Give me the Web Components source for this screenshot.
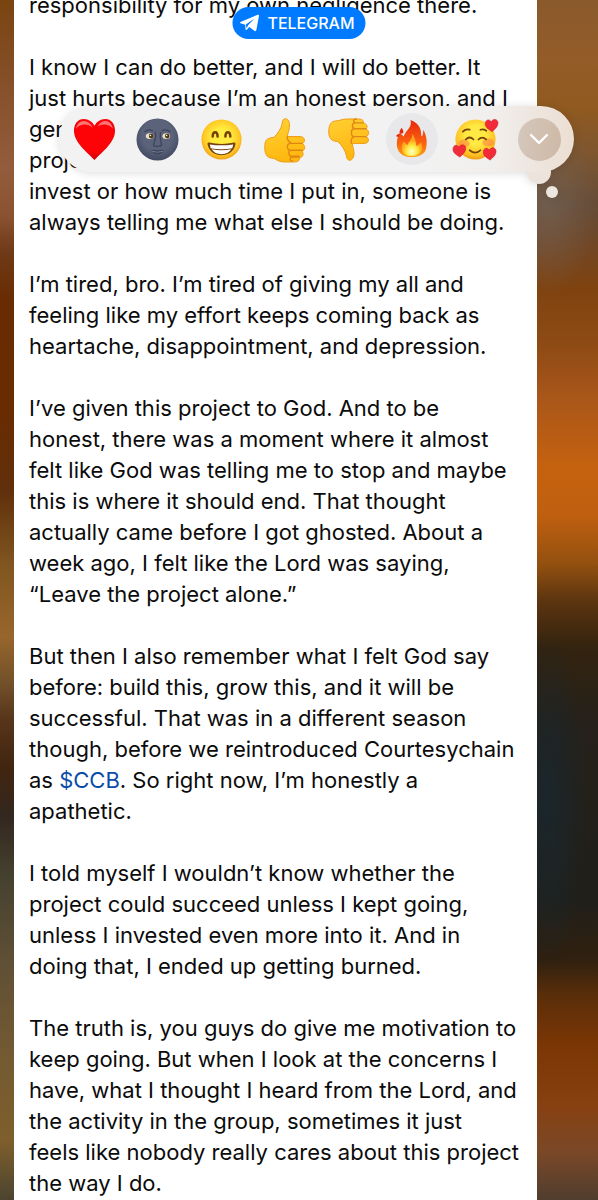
<!DOCTYPE html>
<html lang="en">

<head>
    <meta charset="utf-8">
    <meta name="viewport" content="width=device-width, initial-scale=1">
    <title>Chat</title>
    <style>
        body {
            margin: 0;
            font-family: Inter, "Liberation Sans", sans-serif;
            color: #0b0b0b;
        }
    </style>
</head>

<body>
    <chat-screen>
        <chat-message>
            <p>responsibility for my own negligence there.</p>
            <p>I know I can do better, and I will do better. It<br>just hurts because I’m an honest person, and I<br>genuinely<br>project<br>invest or how much time I put in, someone is<br>always telling me what else I should be doing.</p>
            <p>I’m tired, bro. I’m tired of giving my all and<br>feeling like my effort keeps coming back as<br>heartache, disappointment, and depression.</p>
            <p>I’ve given this project to God. And to be<br>honest, there was a moment where it almost<br>felt like God was telling me to stop and maybe<br>this is where it should end. That thought<br>actually came before I got ghosted. About a<br>week ago, I felt like the Lord was saying,<br>“Leave the project alone.”</p>
            <p>But then I also remember what I felt God say<br>before: build this, grow this, and it will be<br>successful. That was in a different season<br>though, before we reintroduced Courtesychain<br>as <a href="#ccb">$CCB</a>. So right now, I’m honestly a<br>apathetic.</p>
            <p>I told myself I wouldn’t know whether the<br>project could succeed unless I kept going,<br>unless I invested even more into it. And in<br>doing that, I ended up getting burned.</p>
            <p>The truth is, you guys do give me motivation to<br>keep going. But when I look at the concerns I<br>have, what I thought I heard from the Lord, and<br>the activity in the group, sometimes it just<br>feels like nobody really cares about this project<br>the way I do.</p>
        </chat-message>
        <app-badge slot="overlay">TELEGRAM</app-badge>
        <reaction-bar slot="overlay"></reaction-bar>
    </chat-screen>

    <script>
        class ChatScreen extends HTMLElement {
            constructor() {
                super();
                this.attachShadow({ mode: 'open' });
                this.shadowRoot.innerHTML = `
                    <style>
                        :host {
                            display: grid;
                            grid-template-columns: 14px 1fr 61px;
                            position: relative;
                            min-height: 100vh;
                            overflow: hidden;
                        }
                        .left {
                            background: linear-gradient(#7a4410 0%, #85502a 7%, #935c3c 14%, #8a5230 18%, #6f3a18 21%, #692c02 25%, #692b00 34%, #60300c 41%, #80551f 47%, #97662c 53%, #72502a 57%, #56351a 60%, #41250f 64%, #33271f 68%, #45412f 73%, #5f4f35 80%, #735a32 88%, #7e5f2c 95%, #4c4430 100%);
                        }
                        .right {
                            background:
                                radial-gradient(40px 170px at 10px 800px, rgba(24, 40, 48, .8), transparent),
                                radial-gradient(50px 90px at 10px 205px, rgba(120, 104, 92, .6), transparent),
                                linear-gradient(#8a5a2c 0%, #935c28 5%, #905a20 9%, #7c5530 13%, #654c38 17%, #6f4728 20%, #7f4310 24%, #8f4b14 29%, #a9561a 33%, #c5620f 39%, #bf5f10 43%, #93500f 47%, #5d3510 50%, #33230f 54%, #26211a 60%, #201f1a 75%, #30200f 80%, #5a2e0a 83%, #7a3604 87%, #874010 92%, #7a4828 96%, #503d2e 100%);
                        }
                    </style>
                    <div class="left"></div>
                    <slot></slot>
                    <div class="right"></div>
                    <slot name="overlay"></slot>
                `;
            }
        }

        class ChatMessage extends HTMLElement {
            constructor() {
                super();
                this.attachShadow({ mode: 'open' });
                this.shadowRoot.innerHTML = `
                    <style>
                        :host {
                            display: block;
                            min-width: 0;
                            padding: 0 15px;
                            background: #fff;
                            font-size: 22px;
                            line-height: 31px;
                            white-space: nowrap;
                        }
                        /* the thread is scrolled into the middle of the message */
                        .text {
                            display: flex;
                            flex-direction: column;
                            gap: 31px;
                            margin-top: -10px;
                        }
                        ::slotted(p) {
                            margin: 0;
                        }
                    </style>
                    <div class="text"><slot></slot></div>
                `;
            }

            connectedCallback() {
                this.querySelectorAll('a').forEach(link => {
                    link.style.color = '#0b4ca8';
                    link.style.textDecoration = 'none';
                });
            }
        }

        class AppBadge extends HTMLElement {
            constructor() {
                super();
                this.attachShadow({ mode: 'open' });
                this.shadowRoot.innerHTML = `
                    <style>
                        :host {
                            position: absolute;
                            top: 7px;
                            left: 50%;
                            transform: translateX(-50%);
                        }
                        button {
                            display: flex;
                            align-items: center;
                            gap: 8px;
                            height: 32px;
                            padding: 0 11px 0 7px;
                            border: 0;
                            border-radius: 16px;
                            background: #007aff;
                            color: #fff;
                            font: 500 16px Inter, "Liberation Sans", sans-serif;
                        }
                    </style>
                    <button type="button">
                        <svg width="20" height="18" viewBox="0 0 20 18" aria-hidden="true">
                            <path d="M1 8.1 18.2.8Q19.8.3 19.5 2L16.9 16Q16.4 17.8 14.9 16.8L9.8 13.1 7 15.9Q6 16.5 6 14.8L5.8 10.7 1 9.2Q.1 8.7 1 8.1Z" fill="#fff"/>
                            <path d="M6.4 10.6 15 4.6 8.6 11.2 7.2 14.6Z" fill="#007aff"/>
                        </svg>
                        <slot></slot>
                    </button>
                `;
            }
        }

        const icons = {
            'Red heart': `
                <defs><radialGradient id="g" cx=".5" cy=".35" r=".7"><stop offset=".6" stop-color="#fd0308"/><stop offset="1" stop-color="#c90008"/></radialGradient></defs>
                <path d="M22 43C17 37 1 26 1 13 1 6 5 1 11 1c5 0 9 3 11 7 2-4 6-7 11-7 6 0 10 5 10 12 0 13-16 24-21 30Z" fill="url(#g)"/>
                <path d="M3 11c1-5 4-8 8-8 4 0 8 3 9 7-4-4-12-5-17 1ZM25 9c2-4 5-6 8-6 5 0 7 4 8 8-4-5-11-6-16-2Z" fill="#ff9a98" opacity=".75"/>`,
            'New moon face': `
                <defs><radialGradient id="g" cx=".5" cy=".4" r=".6"><stop offset=".6" stop-color="#5b637b"/><stop offset="1" stop-color="#414a61"/></radialGradient></defs>
                <circle cx="22" cy="22" r="21.5" fill="url(#g)"/>
                <path d="M9 14q4-3 8-1M27 13q4-2 8 1M20 15c1 6-2 10-2 13 1 2 3 0 4 1 1-1 3 1 4-1 0-3-2-7-1-13" fill="none" stroke="#3c445b" stroke-width="1.3" stroke-linecap="round"/>
                <path d="M15 33q4-1 7 0 4-1 7 0-3 4-7 4t-7-4Z" fill="#3c445b"/>
                <path d="M16 34q6 2 12 0" fill="none" stroke="#737c94"/>
                <ellipse cx="14" cy="18.5" rx="4" ry="3" fill="#e9e0c9"/><ellipse cx="31" cy="18.5" rx="4" ry="3" fill="#e9e0c9"/>
                <circle cx="15.5" cy="18.5" r="2.4" fill="#4f3511"/><circle cx="32" cy="18.5" r="2.4" fill="#4f3511"/>
                <circle cx="14.8" cy="18" r=".8" fill="#fff"/><circle cx="31.3" cy="18" r=".8" fill="#fff"/>`,
            'Beaming face': `
                <defs><radialGradient id="g" cx=".5" cy=".45" r=".56"><stop offset=".4" stop-color="#ffec3f"/><stop offset=".8" stop-color="#ffc824"/><stop offset="1" stop-color="#f29a12"/></radialGradient></defs>
                <circle cx="22" cy="22" r="20.5" fill="url(#g)"/>
                <path d="M13 19c0-6 5-6 5 0M26 19c0-6 5-6 5 0" fill="none" stroke="#76420a" stroke-width="2.6" stroke-linecap="round"/>
                <path d="M9 25q13 3 26 0 2 0 1 3c-2 7-7 10-14 10S10 35 8 28q-1-3 1-3Z" fill="#76420a"/>
                <path d="M10 27q12 2 24 0l-1 4q-11 2-22 0ZM12 32q10 2 20 0-3 5-10 5t-10-5Z" fill="#fff"/>`,
            'Thumbs up': `
                <defs><linearGradient id="g" x2=".3" y2="1"><stop stop-color="#ffd334"/><stop offset="1" stop-color="#ffb80f"/></linearGradient></defs>
                <path d="M2 27c0-5 4-7 9-7 4-4 8-9 9-16 0-5 7-4 7 2 1 5-2 9-2 13h13c5 0 6 6 2 7 4 2 3 7 0 8 2 3 1 6-3 7 1 3-2 4-5 4H21c-6 0-8-4-12-4-5 0-8-5-7-14Z" fill="url(#g)" stroke="#ed9a10" stroke-width="1"/>
                <path d="M40 26H28c-4 0-4 7 0 7h12M38 33H29c-4 0-3 6 0 6h8M37 40h-7c-3 0-3 4 0 4M25 19c-1 2 1 5 3 6" fill="none" stroke="#df8713" stroke-width="1.4" stroke-linecap="round"/>`,
            'Thumbs down': `
                <defs><linearGradient id="g" x2=".3" y2="1"><stop stop-color="#ffd032"/><stop offset="1" stop-color="#ffb510"/></linearGradient></defs>
                <path d="M2 17C1 8 4 3 9 3c4 0 6-2 12-2h11c3 0 6 1 5 4 4 1 5 4 3 6 3 2 4 6 0 8 4 2 3 7-2 7H26c0 4 3 9 1 14-2 5-7 4-7-1-1-6-5-11-9-15-5 0-8-2-9-7Z" fill="url(#g)" stroke="#ed9a10"/>
                <path d="M37 5h-8c-4 0-4 6 0 6h11M40 11H28c-4 0-4 8 0 8h12M25 26c-1-4 0-6 3-7M30 1c-3 0-4 3-1 4" fill="none" stroke="#df8713" stroke-width="1.4" stroke-linecap="round"/>`,
            'Fire': `
                <defs><linearGradient id="g" x2="0" y2="1"><stop stop-color="#e8260c"/><stop offset=".65" stop-color="#fa6510"/><stop offset="1" stop-color="#fca314"/></linearGradient><radialGradient id="h" cx=".5" cy=".8"><stop stop-color="#fffbd0"/><stop offset=".5" stop-color="#ffed45"/><stop offset="1" stop-color="#ffa51b"/></radialGradient></defs>
                <path d="M21 2c10 4 11 10 11 17 2-1 2-4 2-7 4 7 4 13 3 19-1 6-7 9-15 9-10 0-15-6-15-13 0-5 1-9 3-12l4 4c2-7 9-9 7-17Z" fill="url(#g)"/>
                <path d="M23 16c2 4 4 8 4 13l5-4c1 4 1 7 0 9-2 3-5 5-10 5-7 0-10-4-10-8 0-4 1-5 2-7l4 4c1-5 5-6 5-12Z" fill="url(#h)"/>
                <path d="M12 10q4 6-1 6-3-1 1-6ZM9 16q2 4-2 3-2-1 2-3Z" fill="#e8260c"/>`,
            'Smiling face with hearts': `
                <defs><radialGradient id="g" cx=".5" cy=".4" r=".6"><stop offset=".4" stop-color="#ffea43"/><stop offset=".8" stop-color="#ffc425"/><stop offset="1" stop-color="#f19a14"/></radialGradient></defs>
                <circle cx="22" cy="22" r="20.5" fill="url(#g)"/>
                <ellipse cx="10" cy="26" rx="6" ry="4" fill="#ff7445" opacity=".5"/><ellipse cx="35" cy="25" rx="6" ry="4" fill="#ff7445" opacity=".5"/>
                <path d="M12 22q4-4 8 0M25 22q4-4 8 0M9 14q3-3 7-2M27 12q3-1 6 1M16 33q6 5 11 0" fill="none" stroke="#76420a" stroke-width="1.8" stroke-linecap="round"/>
                <path id="k" d="M39 14c-3-2-7-4-7-8 0-5 5-5 6-2 2-4 7-3 7 1 0 4-3 6-6 9Z" fill="#f22b38" stroke="#d51a2c" stroke-width=".6"/>
                <use href="#k" x="-33" y="26"/><use href="#k" x="-2" y="29"/>`
        };

        class ReactionButton extends HTMLElement {
            connectedCallback() {
                const name = this.getAttribute('name');
                this.attachShadow({ mode: 'open' });
                this.shadowRoot.innerHTML = `
                    <style>
                        :host {
                            display: block;
                        }
                        button {
                            display: grid;
                            place-items: center;
                            width: 52px;
                            height: 52px;
                            padding: 0;
                            border: 0;
                            border-radius: 50%;
                            background: none;
                        }
                        :host([active]) button {
                            background: #e8e8ea;
                        }
                        svg {
                            overflow: visible;
                        }
                    </style>
                    <button type="button" aria-label="${name}">
                        <svg width="43" height="43" viewBox="0 0 44 44" aria-hidden="true">${icons[name]}</svg>
                    </button>
                `;
            }
        }

        class ReactionBar extends HTMLElement {
            constructor() {
                super();
                this.attachShadow({ mode: 'open' });
                this.shadowRoot.innerHTML = `
                    <style>
                        :host {
                            position: absolute;
                            top: 106px;
                            right: 24px;
                            left: 59px;
                            filter: drop-shadow(0 1px 4px rgba(0, 0, 0, .14));
                        }
                        .bar {
                            display: flex;
                            align-items: center;
                            justify-content: space-between;
                            height: 66px;
                            padding: 0 13px 0 9px;
                            border-radius: 33px;
                            background: linear-gradient(90deg, #f2f2f2 70%, #f1efed 84%, #eee6df 92%, #ecdfd3 100%);
                        }
                        .tail {
                            position: absolute;
                            z-index: -1;
                            top: 54px;
                            right: 23px;
                            width: 24px;
                            height: 24px;
                            border-radius: 50%;
                            background: #ece4dc;
                        }
                        .dot {
                            position: absolute;
                            top: 80px;
                            right: 16px;
                            width: 12px;
                            height: 12px;
                            border-radius: 50%;
                            background: #ece6df;
                        }
                        .more {
                            display: grid;
                            place-items: center;
                            width: 43px;
                            height: 43px;
                            margin-left: 5px;
                            padding: 0;
                            border: 0;
                            border-radius: 50%;
                            background: linear-gradient(100deg, #d5c8be, #cdb8a4);
                        }
                    </style>
                    <div class="tail"></div>
                    <div class="dot"></div>
                    <div class="bar">
                        <reaction-button name="Red heart"></reaction-button>
                        <reaction-button name="New moon face"></reaction-button>
                        <reaction-button name="Beaming face"></reaction-button>
                        <reaction-button name="Thumbs up"></reaction-button>
                        <reaction-button name="Thumbs down"></reaction-button>
                        <reaction-button name="Fire" active></reaction-button>
                        <reaction-button name="Smiling face with hearts"></reaction-button>
                        <button class="more" type="button" aria-label="More reactions">
                            <svg width="20" height="12" viewBox="0 0 20 12" aria-hidden="true"><path d="m2 2 8 8 8-8" fill="none" stroke="#fff" stroke-width="2.4" stroke-linecap="round" stroke-linejoin="round"/></svg>
                        </button>
                    </div>
                `;
            }
        }

        customElements.define('chat-screen', ChatScreen);
        customElements.define('chat-message', ChatMessage);
        customElements.define('app-badge', AppBadge);
        customElements.define('reaction-button', ReactionButton);
        customElements.define('reaction-bar', ReactionBar);
    </script>
</body>

</html>
